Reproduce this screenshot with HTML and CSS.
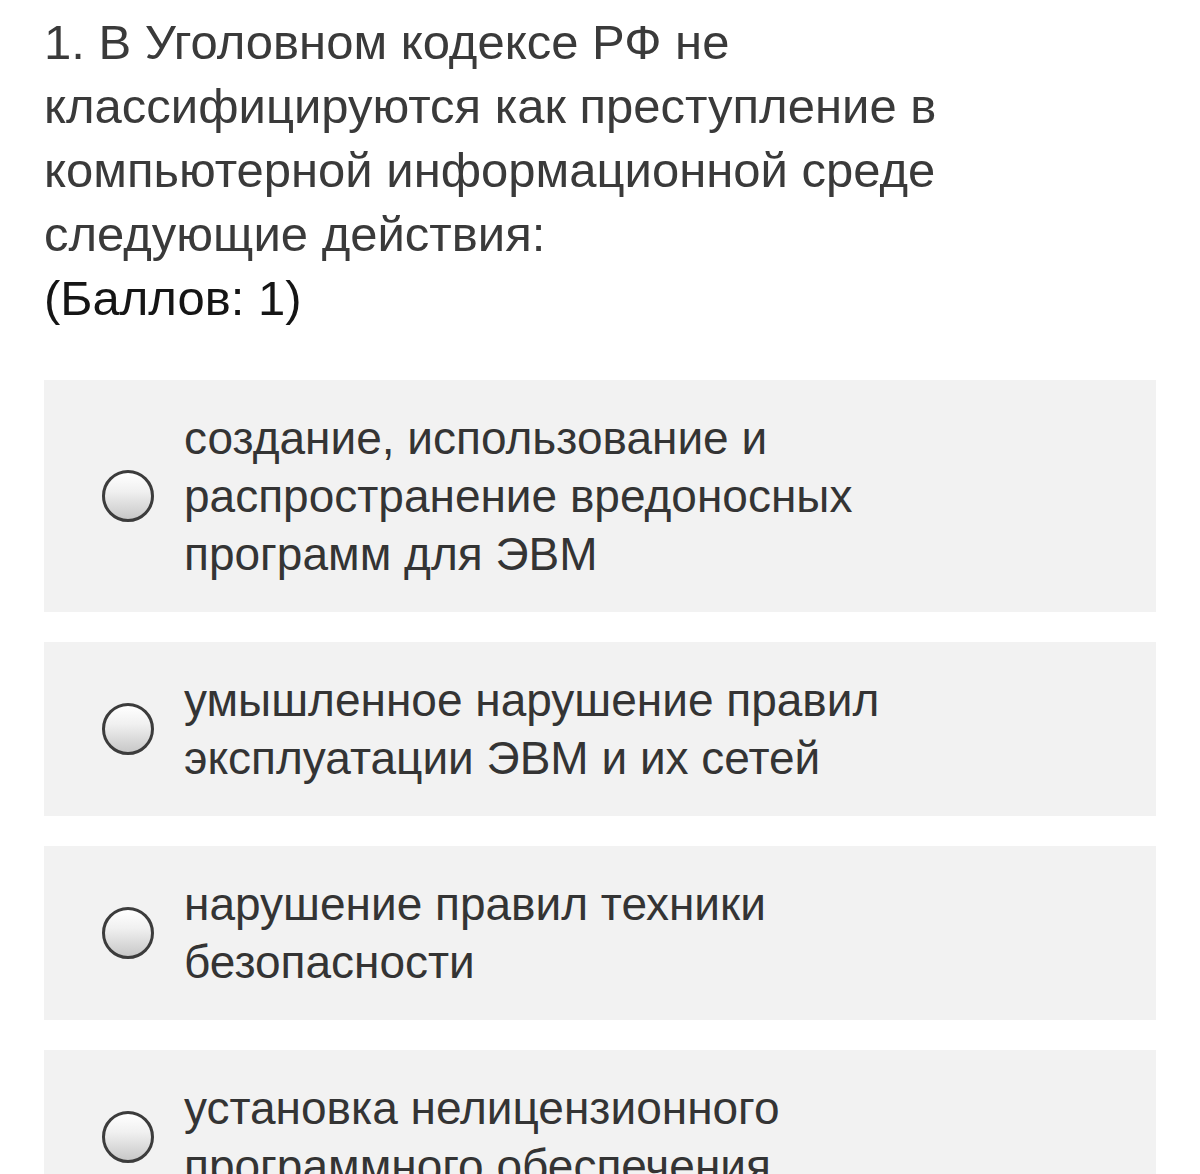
FILE: index.html
```html
<!DOCTYPE html>
<html lang="ru">
<head>
<meta charset="utf-8">
<title>Вопрос 1</title>
<link rel="stylesheet" href="styles.css">
</head>
<body>
<main class="quiz">
  <div class="question">
    <p class="question-text">1.&nbsp;В Уголовном кодексе РФ не классифицируются как преступление в компьютерной информационной среде следующие действия:</p>
    <p class="points">(Баллов: 1)</p>
  </div>
  <ul class="options">
    <li class="option"><span class="radio"></span><span class="label">создание, использование и распространение вредоносных программ для ЭВМ</span></li>
    <li class="option"><span class="radio"></span><span class="label">умышленное нарушение правил эксплуатации ЭВМ и их сетей</span></li>
    <li class="option"><span class="radio"></span><span class="label">нарушение правил техники безопасности</span></li>
    <li class="option"><span class="radio"></span><span class="label">установка нелицензионного программного обеспечения</span></li>
  </ul>
</main>
</body>
</html>
```
FILE: styles.css
```css
html, body {
  margin: 0;
  padding: 0;
  background: #ffffff;
}
body {
  font-family: "Liberation Sans", Arial, Helvetica, sans-serif;
  color: #333333;
}
.quiz {
  padding: 10px 44px 0 44px;
}
.question p {
  margin: 0;
  font-size: 49px;
  line-height: 64px;
}
.question-text {
  color: #3a3a3a;
}
.points {
  color: #151515;
}
.options {
  list-style: none;
  margin: 50px 0 0 0;
  padding: 0;
  display: flex;
  flex-direction: column;
  gap: 30px;
}
.option {
  background: #f2f2f2;
  display: flex;
  align-items: center;
  padding: 29px 190px 29px 58px;
}
.radio {
  flex: 0 0 auto;
  width: 46px;
  height: 46px;
  border: 3px solid #3c3c3c;
  border-radius: 50%;
  background: linear-gradient(to bottom, #ffffff 0%, #f0f0f0 40%, #c8c8c8 100%);
  margin-right: 30px;
}
.label {
  font-size: 46px;
  line-height: 58px;
  color: #343434;
}
```
